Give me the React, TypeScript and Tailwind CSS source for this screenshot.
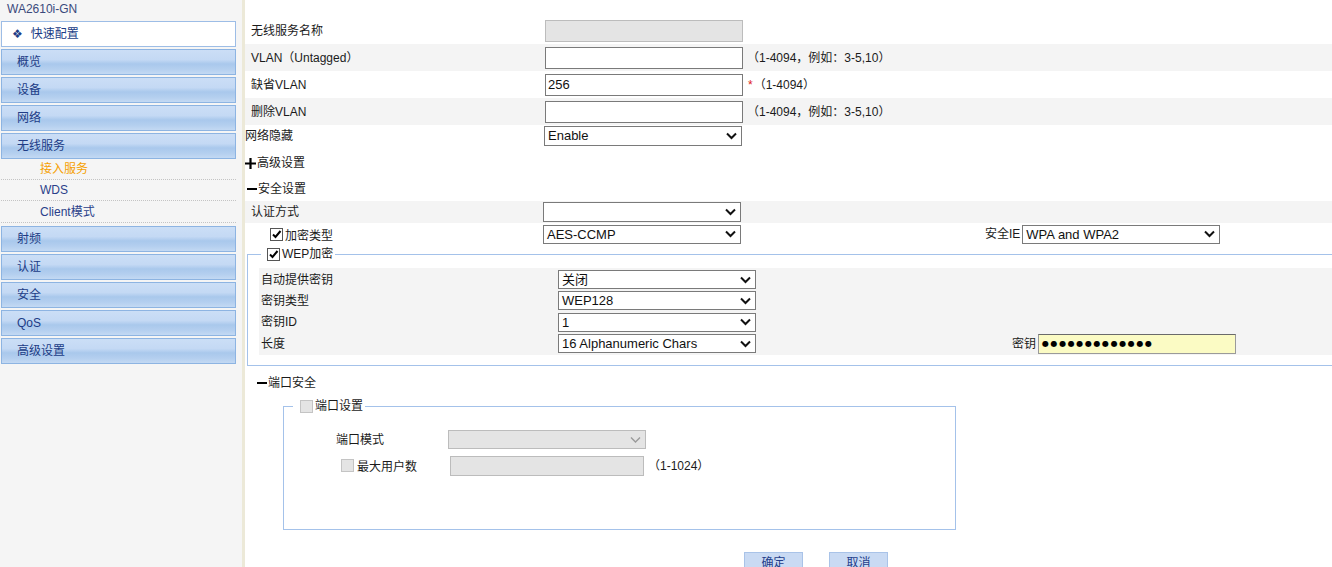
import clsx from 'clsx';
import type { ReactNode } from 'react';

const menuTop = ['概览', '设备', '网络', '无线服务'];
const subMenu = [
  { label: '接入服务', active: true },
  { label: 'WDS', active: false },
  { label: 'Client模式', active: false },
];
const menuBottom = ['射频', '认证', '安全', 'QoS', '高级设置'];

function MenuItem({ label, className }: { label: string; className?: string }) {
  return (
    <div
      className={clsx(
        'flex h-[26px] items-center border border-[#8db4e2] pl-[15px] text-[12px] text-[#203c86]',
        'bg-[linear-gradient(to_bottom,#cbdef6_0%,#c4d9f4_40%,#a9c8ec_58%,#b4cfef_80%,#c3d9f3_100%)]',
        className
      )}
    >
      {label}
    </div>
  );
}

function Sidebar() {
  return (
    <aside className="w-[242px] shrink-0 bg-[#f5f5f5] pl-[1px] pr-[6px]">
      <div className="h-[21px] pl-[6px] pt-[2px] text-[12px] leading-[14px] text-[#3b4a7c]">WA2610i-GN</div>
      <div className="mb-[2px] flex h-[26px] items-center border border-[#9dbde6] bg-white pl-[10px] text-[12px] text-[#203c86]">
        <span className="mr-[8px] font-['DejaVu_Sans',sans-serif] text-[12px] text-[#203c86]">❖</span>
        快速配置
      </div>
      {menuTop.map((m, i) => (
        <MenuItem key={m} label={m} className={i < menuTop.length - 1 ? 'mb-[2px]' : ''} />
      ))}
      {subMenu.map((s, i) => (
        <div
          key={s.label}
          className={clsx(
            'flex items-center border-b border-dotted border-[#c4c4c4] pl-[39px] text-[12px]',
            i === 2 ? 'h-[22px]' : 'h-[21px]',
            s.active ? 'text-[#f5a000]' : 'text-[#2a3f8a]'
          )}
        >
          {s.label}
        </div>
      ))}
      <div className="mt-[3px]">
        {menuBottom.map((m) => (
          <MenuItem key={m} label={m} className="mb-[2px]" />
        ))}
      </div>
    </aside>
  );
}

function Chevron({ disabled }: { disabled?: boolean }) {
  return (
    <svg width="11" height="8" viewBox="0 0 11 8" className="absolute right-[4px] top-1/2 -translate-y-1/2">
      <polyline
        points="1,1.5 5.5,6 10,1.5"
        fill="none"
        stroke={disabled ? '#9a9a9a' : '#111'}
        strokeWidth={disabled ? 1.4 : 2}
      />
    </svg>
  );
}

function Select({ value, className, disabled }: { value?: string; className?: string; disabled?: boolean }) {
  return (
    <div
      className={clsx(
        'relative flex shrink-0 items-center border pl-[3px] text-[13px] leading-none text-[#111]',
        disabled ? 'border-[#bcbcbc] bg-[#e4e4e4]' : 'border-[#7a7a7a] bg-white',
        className
      )}
    >
      {value}
      <Chevron disabled={disabled} />
    </div>
  );
}

function TextBox({ value, className, disabled }: { value?: string; className?: string; disabled?: boolean }) {
  return (
    <div
      className={clsx(
        'flex shrink-0 items-center border pl-[2px] text-[13px] leading-none text-[#111]',
        disabled ? 'border-[#bcbcbc] bg-[#e4e4e4]' : 'border-[#7a7a7a] bg-white',
        className
      )}
    >
      {value}
    </div>
  );
}

function Check({ checked, disabled }: { checked?: boolean; disabled?: boolean }) {
  return (
    <span
      className={clsx(
        'inline-flex h-[13px] w-[13px] shrink-0 items-center justify-center border',
        disabled ? 'border-[#c4c4c4] bg-[#e4e4e4]' : 'border-[#555] bg-white'
      )}
    >
      {checked && (
        <svg width="11" height="11" viewBox="0 0 11 11">
          <polyline points="2,5.5 4.5,8 9.5,2" fill="none" stroke="#000" strokeWidth="2" />
        </svg>
      )}
    </span>
  );
}

function Minus() {
  return <span className="mr-[1px] h-[2px] w-[10px] shrink-0 bg-black" />;
}

function Plus() {
  return (
    <svg width="11" height="11" viewBox="0 0 11 11" className="mr-[1px] shrink-0">
      <path d="M0 5.5H11M5.5 0V11" stroke="#000" strokeWidth="2.2" />
    </svg>
  );
}

function Row({ label, gray, children, className }: { label: ReactNode; gray?: boolean; children?: ReactNode; className?: string }) {
  return (
    <div className={clsx('flex h-[27px] items-center', gray && 'bg-[#f4f4f4]', className)}>
      <div className="w-[300px] shrink-0 pl-[6px]">{label}</div>
      {children}
    </div>
  );
}

const hint = '（1-4094，例如：3-5,10）';

function WepRow({ label, value, children, className }: { label: string; value: string; children?: ReactNode; className?: string }) {
  return (
    <div className={clsx('flex items-center', className ?? 'h-[21px]')}>
      <div className="w-[299px] shrink-0 pl-[2px]">{label}</div>
      <Select value={value} className="h-[19px] w-[198px]" />
      {children}
    </div>
  );
}

export default function App() {
  return (
    <div className="flex h-[567px] w-full overflow-hidden bg-white font-['Liberation_Sans','Noto_Sans_CJK_SC',sans-serif] text-[12px] text-[#1b1b1b]">
      <Sidebar />
      <div className="w-[3px] shrink-0 bg-[#ece9d8]" />

      <main className="min-w-0 flex-1 overflow-hidden pt-[17px]">
        <Row label="无线服务名称">
          <TextBox disabled className="h-[22px] w-[198px]" />
        </Row>
        <Row label="VLAN（Untagged）" gray>
          <TextBox className="h-[22px] w-[198px]" />
          <span className="ml-[4px]">{hint}</span>
        </Row>
        <Row label="缺省VLAN">
          <TextBox value="256" className="h-[22px] w-[198px]" />
          <span className="ml-[5px] text-[#e02020]">*</span>
          <span className="ml-[1px]">（1-4094）</span>
        </Row>
        <Row label="删除VLAN" gray>
          <TextBox className="h-[22px] w-[198px]" />
          <span className="ml-[4px]">{hint}</span>
        </Row>

        <div className="flex h-[21px] items-center">
          <div className="w-[299px] shrink-0">网络隐藏</div>
          <Select value="Enable" className="h-[20px] w-[198px]" />
        </div>

        <div className="mt-[3px] flex h-[28px] items-center">
          <Plus />
          <span>高级设置</span>
        </div>
        <div className="flex h-[24px] items-center pl-[2px]">
          <Minus />
          <span>安全设置</span>
        </div>

        <div className="flex h-[22px] items-center bg-[#f4f4f4]">
          <div className="w-[298px] shrink-0 pl-[6px]">认证方式</div>
          <Select className="h-[20px] w-[198px]" />
        </div>
        <div className="flex h-[22px] items-center">
          <div className="flex w-[298px] shrink-0 items-center pl-[25px]">
            <Check checked />
            <span className="ml-[2px] pt-[3px]">加密类型</span>
          </div>
          <Select value="AES-CCMP" className="h-[19px] w-[198px]" />
          <span className="ml-[244px] mr-[2px]">安全IE</span>
          <Select value="WPA and WPA2" className="h-[19px] w-[198px]" />
        </div>

        <fieldset className="ml-[2px] mt-[2px] w-[1100px] border border-[#a4c2ea] pb-[10px]">
          <legend className="ml-[13px] flex h-[14px] items-center px-[2px] leading-[14px]">
            <span className="ml-[4px] flex">
              <Check checked />
            </span>
            <span className="ml-[2px] leading-[14px]">WEP加密</span>
          </legend>
          <div className="ml-[11px] mt-[7px] bg-[#f4f4f4] pb-[1px] pt-[1px]">
            <WepRow label="自动提供密钥" value="关闭" />
            <WepRow label="密钥类型" value="WEP128" />
            <WepRow label="密钥ID" value="1" className="h-[22px]" />
            <WepRow label="长度" value="16 Alphanumeric Chars">
              <span className="ml-[256px] mr-[2px]">密钥</span>
              <div className="flex h-[20px] w-[198px] items-center border border-[#9a9a9a] border-t-[#6a6a6a] bg-[#fbfbc4] pl-[3px] font-['DejaVu_Sans',sans-serif] text-[8px] tracking-[1.6px] text-black">
                ●●●●●●●●●●●●●
              </div>
            </WepRow>
          </div>
        </fieldset>

        <div className="ml-[12px] mt-[7px] flex h-[20px] items-center">
          <Minus />
          <span>端口安全</span>
        </div>

        <fieldset className="ml-[38px] mt-[6px] w-[673px] border border-[#a4c2ea] pb-[53px]">
          <legend className="ml-[9px] flex h-[14px] items-center pl-[3px] pr-[2px] leading-[14px]">
            <span className="ml-[4px] flex">
              <Check disabled />
            </span>
            <span className="ml-[2px] leading-[14px]">端口设置</span>
          </legend>
          <div className="mt-[16px] flex h-[21px] items-center">
            <div className="w-[164px] shrink-0 pl-[52px]">端口模式</div>
            <Select disabled className="h-[19px] w-[198px]" />
          </div>
          <div className="mt-[5px] flex h-[21px] items-center">
            <div className="flex w-[166px] shrink-0 items-center pl-[57px]">
              <Check disabled />
              <span className="ml-[3px] pt-[3px]">最大用户数</span>
            </div>
            <TextBox disabled className="h-[20px] w-[194px]" />
            <span className="ml-[4px]">（1-1024）</span>
          </div>
        </fieldset>

        <div className="ml-[499px] mt-[22px] flex gap-[26px]">
          <button className="h-[22px] w-[59px] border border-[#a9c3e8] bg-[#c9daf3] text-[12px] text-[#1f3d8a]">确定</button>
          <button className="h-[22px] w-[59px] border border-[#a9c3e8] bg-[#c9daf3] text-[12px] text-[#1f3d8a]">取消</button>
        </div>
      </main>
    </div>
  );
}
